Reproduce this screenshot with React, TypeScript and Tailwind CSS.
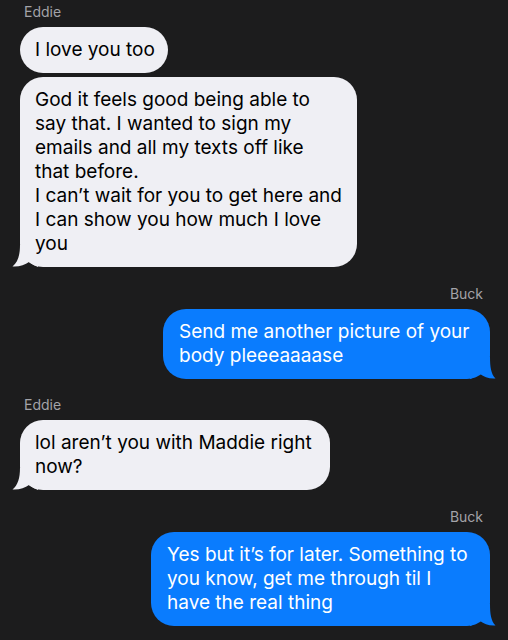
import React from 'react';

type Side = 'left' | 'right';
type BubbleData = { w: string; lines: string[] };
type Msg = { from: 'Eddie' | 'Buck'; bubbles: BubbleData[] };

// explicit line breaks + widths so the bubbles wrap like the screenshot
const thread: Msg[] = [
  {
    from: 'Eddie',
    bubbles: [
      { w: 'w-[148px]', lines: ['I love you too'] },
      {
        w: 'w-[337px]',
        lines: [
          'God it feels good being able to',
          'say that. I wanted to sign my',
          'emails and all my texts off like',
          'that before.',
          'I can\u2019t wait for you to get here and',
          'I can show you how much I love',
          'you',
        ],
      },
    ],
  },
  {
    from: 'Buck',
    bubbles: [{ w: 'w-[327px]', lines: ['Send me another picture of your', 'body pleeeaaaase'] }],
  },
  {
    from: 'Eddie',
    bubbles: [{ w: 'w-[310px]', lines: ['lol aren\u2019t you with Maddie right', 'now?'] }],
  },
  {
    from: 'Buck',
    bubbles: [
      {
        w: 'w-[339px]',
        lines: ['Yes but it\u2019s for later. Something to', 'you know, get me through til I', 'have the real thing'],
      },
    ],
  },
];

function Tail({ side }: { side: Side }) {
  if (side === 'left') {
    return (
      <svg className="absolute -left-[8px] bottom-0" width="26" height="22" viewBox="0 0 26 22">
        <path d="M8 0 C8 10 6 17 0.5 21.5 C7 22 13 20 17 17 C20 19 23 21 26 22 L26 0 Z" fill="#efeff4" />
      </svg>
    );
  }
  return (
    <svg className="absolute -right-[6px] bottom-0" width="26" height="22" viewBox="0 0 26 22">
      <path d="M20 0 C20 10 21 17 25.5 21.5 C19 22 14 20 10 17 C7 19 3 21 0 22 L0 0 Z" fill="#0a7cfe" />
    </svg>
  );
}

function Bubble({ data, side, tail }: { data: BubbleData; side: Side; tail: boolean }) {
  const mine = side === 'right';
  return (
    <div
      className={`relative ${data.w} rounded-[23px] py-[11px] text-[19px] leading-[24px] whitespace-nowrap ${
        mine ? 'self-end pl-[16px] bg-[#0a7cfe] text-white' : 'self-start pl-[15px] bg-[#efeff4] text-black'
      }`}
    >
      {tail && <Tail side={side} />}
      <div className="relative">
        {data.lines.map((l, i) => (
          <div key={i}>{l}</div>
        ))}
      </div>
    </div>
  );
}

export default function App() {
  return (
    <div className="min-h-screen w-[508px] bg-[#1c1c1d] pl-[20px] pr-[18px] pt-[3px] font-['Inter',sans-serif] overflow-hidden">
      <div className="flex flex-col gap-[17.5px]">
        {thread.map((m, i) => {
          const side: Side = m.from === 'Buck' ? 'right' : 'left';
          return (
            <div key={i} className="flex flex-col">
              <div
                className={`text-[14px] leading-[18px] text-[#a3a3a8] mb-[6px] ${
                  side === 'right' ? 'self-end pr-[7px]' : 'self-start pl-[4px]'
                }`}
              >
                {m.from}
              </div>
              <div className="flex flex-col gap-[4px]">
                {m.bubbles.map((b, j) => (
                  <Bubble key={j} data={b} side={side} tail={j === m.bubbles.length - 1} />
                ))}
              </div>
            </div>
          );
        })}
      </div>
    </div>
  );
}
